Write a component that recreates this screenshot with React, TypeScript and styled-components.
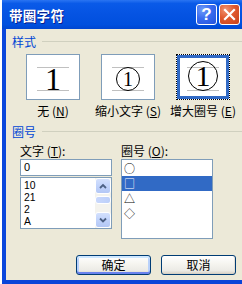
import React from 'react';
import styled, { createGlobalStyle } from 'styled-components';

const Global = createGlobalStyle`
  html, body { margin: 0; padding: 0; background: #fff; }
  body {
    width: 242px; height: 284px; overflow: hidden;
    font-family: "Noto Sans CJK SC", "Noto Sans", sans-serif;
    font-size: 12px; color: #000;
  }
`;

const Screen = styled.div`
  display: flex;
  width: 242px;
  height: 284px;
`;

const Backdrop = styled.div`
  width: 2px;
  flex: none;
  background: #fff;
`;

const Window = styled.div`
  flex: 1;
  min-width: 0;
  display: flex;
  flex-direction: column;
`;

const TitleBar = styled.div`
  height: 29px;
  flex: none;
  display: flex;
  align-items: center;
  padding: 0 2px 0 7px;
  background: linear-gradient(180deg, #2a74f2 0%, #0a5ae8 12%, #0553e2 50%, #0050de 85%, #0046d0 100%);
`;

const Title = styled.div`
  flex: 1;
  color: #fff;
  font-weight: 700;
  font-size: 13.5px;
  line-height: 16px;
  letter-spacing: 0.3px;
  text-shadow: 1px 1px 0 #0a1e8c;
`;

const TitleButton = styled.div<{ $kind: 'help' | 'close' }>`
  width: 21px;
  height: 21px;
  box-sizing: border-box;
  margin-left: 2px;
  border: 1px solid #fff;
  border-radius: 3px;
  display: flex;
  align-items: center;
  justify-content: center;
  color: #fff;
  font-family: "Liberation Sans", Arial, sans-serif;
  font-weight: 700;
  font-size: 17px;
  line-height: 1;
  background: ${(p) =>
    p.$kind === 'help'
      ? 'radial-gradient(circle at 30% 25%, #6f9cf8 0%, #3a6cef 45%, #2352dc 100%)'
      : 'radial-gradient(circle at 30% 25%, #f09472 0%, #e0592e 45%, #c6401a 100%)'};
`;

const Frame = styled.div`
  flex: 1;
  display: flex;
  flex-direction: column;
  background: #ece9d8;
  border-left: 4px solid #0a47dc;
  border-bottom: 4px solid #0a44d8;
`;

const GroupHeader = styled.div<{ $top: number }>`
  display: flex;
  align-items: center;
  height: 13px;
  line-height: 13px;
  margin-top: ${(p) => p.$top}px;
  padding-left: 6px;
  color: #0046d5;
  white-space: nowrap;
  &::after {
    content: '';
    flex: 1;
    height: 1px;
    margin-left: 6px;
    background: #d0d0bf;
  }
`;

const PreviewRow = styled.div`
  display: flex;
  gap: 21px;
  margin-top: 6px;
  padding-left: 20px;
`;

const PreviewCol = styled.div`
  width: 54px;
  display: flex;
  flex-direction: column;
  align-items: center;
`;

const PreviewBox = styled.div<{ $selected?: boolean }>`
  width: 54px;
  height: 46px;
  box-sizing: border-box;
  background: #fff;
  padding: 12px 10px 0;
  border: 1px ${(p) => (p.$selected ? 'dotted #000' : 'solid #7f9db9')};
  box-shadow: ${(p) => (p.$selected ? 'inset 0 0 0 3px #316ac5' : 'none')};
`;

const Baselines = styled.div`
  height: 24px;
  box-sizing: border-box;
  border-top: 1px solid #c0c0c0;
  border-bottom: 1px solid #c0c0c0;
  display: flex;
  align-items: flex-end;
  justify-content: center;
`;

const BigDigit = styled.span`
  font-family: "Liberation Serif", "Times New Roman", serif;
  font-size: 32px;
  line-height: 32px;
  margin-bottom: -5px;
`;

const Circled = styled.span<{ $size: number; $font: number }>`
  width: ${(p) => p.$size}px;
  height: ${(p) => p.$size}px;
  box-sizing: border-box;
  flex: none;
  border: 1.5px solid #000;
  border-radius: 50%;
  display: flex;
  align-items: center;
  justify-content: center;
  margin-bottom: -1px;
  font-family: "Liberation Serif", "Times New Roman", serif;
  font-size: ${(p) => p.$font}px;
  line-height: 1;
`;

const OptionLabel = styled.div`
  margin-top: 4px;
  line-height: 13px;
  white-space: nowrap;
`;

const Fields = styled.div`
  display: flex;
  gap: 9px;
  margin-top: 6px;
  padding-left: 14px;
`;

const Field = styled.div`
  width: 92px;
  display: flex;
  flex-direction: column;
`;

const FieldLabel = styled.div`
  line-height: 13px;
  margin-bottom: 2px;
  white-space: nowrap;
`;

const TextBox = styled.div`
  height: 17px;
  box-sizing: border-box;
  border: 1px solid #7f9db9;
  background: #fff;
  padding-left: 3px;
  line-height: 15px;
  font-family: "Liberation Sans", Arial, sans-serif;
  font-size: 11px;
`;

const ListBox = styled.div<{ $height: number; $gap?: number }>`
  height: ${(p) => p.$height}px;
  margin-top: ${(p) => p.$gap ?? 0}px;
  box-sizing: border-box;
  border: 1px solid #7f9db9;
  background: #fff;
  display: flex;
`;

const Items = styled.div<{ $padTop: number }>`
  flex: 1;
  min-width: 0;
  padding-top: ${(p) => p.$padTop}px;
`;

const TextItem = styled.div`
  height: 12px;
  line-height: 12px;
  padding-left: 3px;
  font-family: "Liberation Sans", Arial, sans-serif;
  font-size: 10.4px;
`;

const SymbolItem = styled.div<{ $selected?: boolean }>`
  height: 15px;
  line-height: 15px;
  padding-left: 2px;
  font-size: 11px;
  background: ${(p) => (p.$selected ? '#316ac5' : 'transparent')};
  color: ${(p) => (p.$selected ? '#fff' : '#000')};
`;

const ScrollBar = styled.div`
  width: 16px;
  flex: none;
  display: flex;
  flex-direction: column;
  background: #f4f3ee;
`;

const ScrollButton = styled.div`
  height: 16px;
  flex: none;
  box-sizing: border-box;
  border: 1px solid #fff;
  border-radius: 3px;
  background: linear-gradient(180deg, #d3e0fd 0%, #c1d3fb 50%, #b3c7f5 100%);
  display: flex;
  align-items: center;
  justify-content: center;
`;

const Track = styled.div`
  flex: 1;
  padding-top: 2px;
`;

const Thumb = styled.div`
  height: 8px;
  box-sizing: border-box;
  border: 1px solid #fff;
  border-radius: 3px;
  background: linear-gradient(90deg, #c9d8fc 0%, #bccffa 100%);
`;

const ButtonRow = styled.div`
  margin-top: auto;
  display: flex;
  justify-content: flex-end;
  gap: 10px;
  padding: 0 6px 5px 0;
`;

const PushButton = styled.div<{ $default?: boolean }>`
  width: 75px;
  height: 20px;
  box-sizing: border-box;
  border: 1px solid #003c74;
  border-radius: 3px;
  display: flex;
  align-items: center;
  justify-content: center;
  line-height: 14px;
  background: linear-gradient(180deg, #ffffff 0%, #f5f4ef 45%, #ecebe6 80%, #d6d0c5 100%);
  box-shadow: ${(p) =>
    p.$default
      ? 'inset 0 2px 0 #cee7ff, inset 0 -2px 0 #6982ee, inset 2px 0 0 #b9d1fa, inset -2px 0 0 #b9d1fa'
      : 'inset 0 -1px 0 #d6d0c5, inset -1px 0 0 #e3e0d8'};
`;

const Chevron = ({ up }: { up: boolean }) => (
  <svg width="8" height="6" viewBox="0 0 8 6">
    <path
      d={up ? 'M1 5 L4 2 L7 5' : 'M1 1.5 L4 4.5 L7 1.5'}
      fill="none"
      stroke="#4d6185"
      strokeWidth="1.8"
    />
  </svg>
);

const CloseX = () => (
  <svg width="13" height="13" viewBox="0 0 13 13">
    <path d="M2 2 L11 11 M11 2 L2 11" stroke="#fff" strokeWidth="2.2" strokeLinecap="square" />
  </svg>
);

export default function App() {
  return (
    <>
      <Global />
      <Screen>
        <Backdrop />
        <Window>
          <TitleBar>
            <Title>带圈字符</Title>
            <TitleButton $kind="help">?</TitleButton>
            <TitleButton $kind="close">
              <CloseX />
            </TitleButton>
          </TitleBar>
          <Frame>
            <GroupHeader $top={6}>样式</GroupHeader>
            <PreviewRow>
              <PreviewCol>
                <PreviewBox>
                  <Baselines>
                    <BigDigit>1</BigDigit>
                  </Baselines>
                </PreviewBox>
                <OptionLabel>
                  无 (<u>N</u>)
                </OptionLabel>
              </PreviewCol>
              <PreviewCol>
                <PreviewBox>
                  <Baselines>
                    <Circled $size={24} $font={20}>1</Circled>
                  </Baselines>
                </PreviewBox>
                <OptionLabel>
                  缩小文字 (<u>S</u>)
                </OptionLabel>
              </PreviewCol>
              <PreviewCol>
                <PreviewBox $selected>
                  <Baselines>
                    <Circled $size={30} $font={30}>1</Circled>
                  </Baselines>
                </PreviewBox>
                <OptionLabel>
                  增大圈号 (<u>E</u>)
                </OptionLabel>
              </PreviewCol>
            </PreviewRow>
            <GroupHeader $top={8}>圈号</GroupHeader>
            <Fields>
              <Field>
                <FieldLabel>
                  文字 (<u>T</u>):
                </FieldLabel>
                <TextBox>0</TextBox>
                <ListBox $height={52} $gap={1}>
                  <Items $padTop={2}>
                    <TextItem>10</TextItem>
                    <TextItem>21</TextItem>
                    <TextItem>2</TextItem>
                    <TextItem>A</TextItem>
                  </Items>
                  <ScrollBar>
                    <ScrollButton>
                      <Chevron up />
                    </ScrollButton>
                    <Track>
                      <Thumb />
                    </Track>
                    <ScrollButton>
                      <Chevron up={false} />
                    </ScrollButton>
                  </ScrollBar>
                </ListBox>
              </Field>
              <Field>
                <FieldLabel>
                  圈号 (<u>O</u>):
                </FieldLabel>
                <ListBox $height={80}>
                  <Items $padTop={1}>
                    <SymbolItem>○</SymbolItem>
                    <SymbolItem $selected>□</SymbolItem>
                    <SymbolItem>△</SymbolItem>
                    <SymbolItem>◇</SymbolItem>
                  </Items>
                </ListBox>
              </Field>
            </Fields>
            <ButtonRow>
              <PushButton $default>确定</PushButton>
              <PushButton>取消</PushButton>
            </ButtonRow>
          </Frame>
        </Window>
      </Screen>
    </>
  );
}
